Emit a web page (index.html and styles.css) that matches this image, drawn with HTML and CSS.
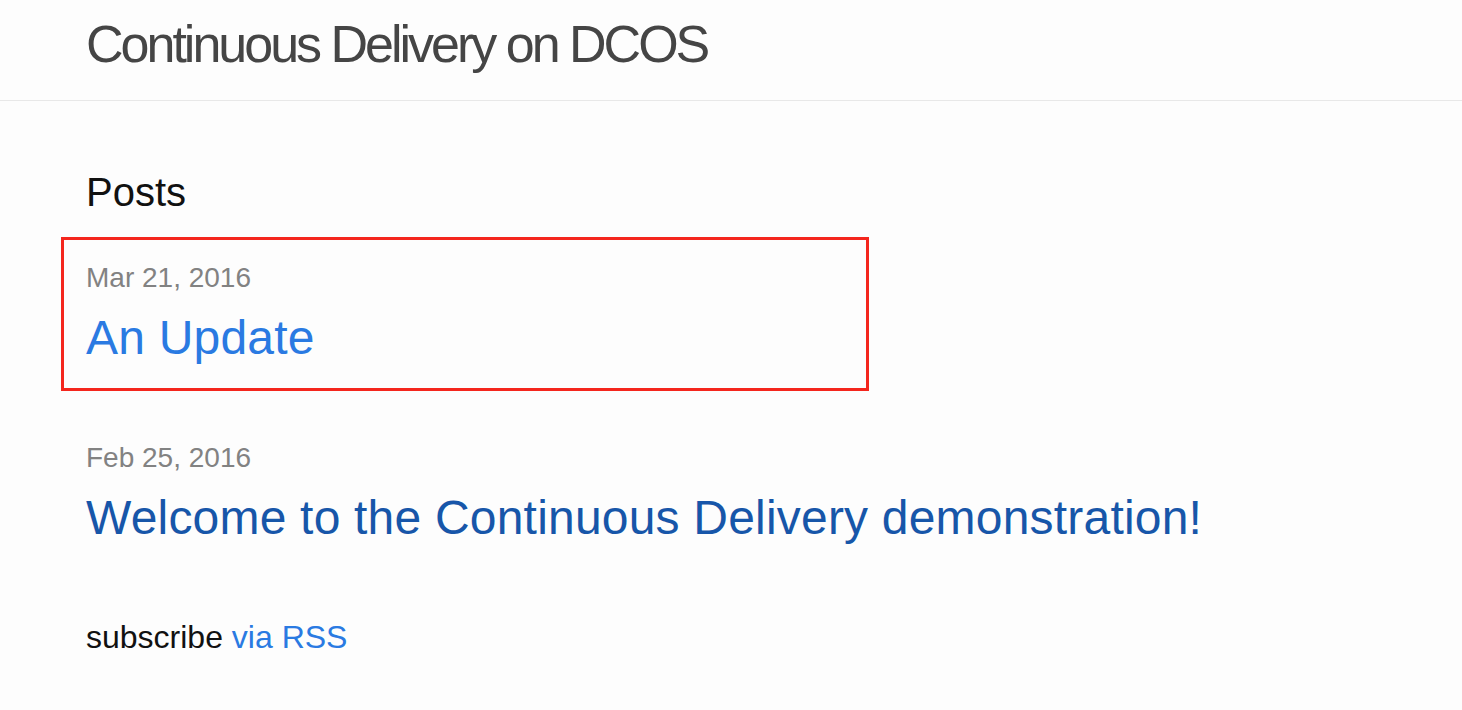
FILE: index.html
```html
<!DOCTYPE html>
<html lang="en">
<head>
<meta charset="utf-8">
<title>Continuous Delivery on DCOS</title>
<link rel="stylesheet" href="styles.css">
</head>
<body>
<header class="site-header">
  <div class="wrapper">
    <a class="site-title" href="#">Continuous Delivery on DCOS</a>
  </div>
</header>
<main class="page-content">
  <div class="wrapper">
    <h1 class="page-heading">Posts</h1>
    <ul class="post-list">
      <li class="post-item highlighted">
        <span class="post-meta">Mar 21, 2016</span>
        <h2 class="post-title"><a class="post-link" href="#">An Update</a></h2>
        <div class="highlight-box"></div>
      </li>
      <li class="post-item">
        <span class="post-meta">Feb 25, 2016</span>
        <h2 class="post-title"><a class="post-link visited" href="#">Welcome to the Continuous Delivery demonstration!</a></h2>
      </li>
    </ul>
    <p class="rss-subscribe">subscribe <a class="rss-link" href="#">via RSS</a></p>
  </div>
</main>
</body>
</html>
```

FILE: styles.css
```css
html, body {
  margin: 0;
  padding: 0;
}
body {
  background: #fdfdfd;
  font-family: "Liberation Sans", Arial, Helvetica, sans-serif;
  color: #111111;
}
.wrapper {
  padding: 0 40px 0 86px;
}
.site-header {
  box-sizing: border-box;
  height: 101px;
  padding-top: 16px;
  border-bottom: 1px solid #e8e8e8;
}
.site-title {
  display: block;
  font-size: 52px;
  line-height: 56px;
  letter-spacing: -3px;
  color: #454545;
  text-decoration: none;
  font-weight: 400;
}
.page-content {
  padding-top: 67px;
}
.page-heading {
  margin: 0;
  font-size: 40px;
  line-height: 48px;
  font-weight: 400;
  color: #111111;
}
.post-list {
  list-style: none;
  margin: 42px 0 0 0;
  padding: 0;
}
.post-item {
  position: relative;
  margin: 0 0 72px 0;
}
.post-meta {
  display: block;
  font-size: 28px;
  line-height: 40px;
  color: #828282;
}
.post-title {
  margin: 12px 0 0 0;
  font-size: 48px;
  line-height: 56px;
  font-weight: 400;
  letter-spacing: 0.2px;
}
.post-link {
  color: #2a7ae2;
  text-decoration: none;
}
.post-link.visited {
  color: #1756a9;
}
.highlight-box {
  position: absolute;
  box-sizing: border-box;
  top: -21px;
  left: -25px;
  width: 808px;
  height: 154px;
  border: 3px solid #f4261d;
  pointer-events: none;
}
.rss-subscribe {
  margin: -3px 0 0 0;
  font-size: 32px;
  line-height: 44px;
  color: #111111;
}
.rss-link {
  color: #2a7ae2;
  text-decoration: none;
}
```
